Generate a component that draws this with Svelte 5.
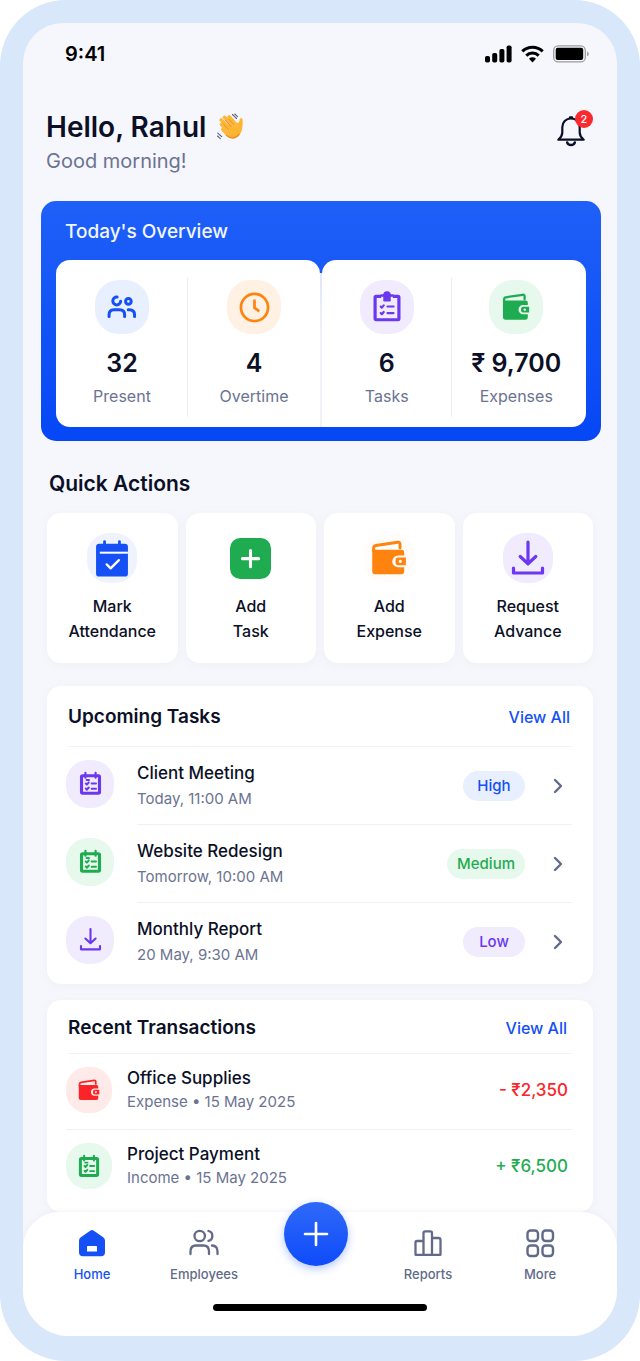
<script>
	const overview = [
		[
			{ icon: 'people', size: 30, tone: 'blue', value: '32', label: 'Present' },
			{ icon: 'clock', size: 31, tone: 'orange', value: '4', label: 'Overtime' }
		],
		[
			{ icon: 'clipboard', size: 30, tone: 'purple', value: '6', label: 'Tasks' },
			{ icon: 'wallet', size: 28, tone: 'green', value: '₹ 9,700', label: 'Expenses' }
		]
	];

	const actions = [
		{ icon: 'calendar', size: 34, tone: 'pale', lines: ['Mark', 'Attendance'] },
		{ icon: 'plusbox', size: 41, tone: 'plain', lines: ['Add', 'Task'] },
		{ icon: 'wallet', size: 36, tone: 'amber', lines: ['Add', 'Expense'] },
		{ icon: 'download', size: 32, tone: 'purple', lines: ['Request', 'Advance'] }
	];

	const tasks = [
		{ icon: 'note', size: 25, tone: 'purple', title: 'Client Meeting', due: 'Today, 11:00 AM', level: 'High', color: 'blue' },
		{ icon: 'note', size: 25, tone: 'green', title: 'Website Redesign', due: 'Tomorrow, 10:00 AM', level: 'Medium', color: 'green' },
		{ icon: 'download', size: 21, tone: 'purple', title: 'Monthly Report', due: '20 May, 9:30 AM', level: 'Low', color: 'purple' }
	];

	const transactions = [
		{ icon: 'wallet', size: 22, tone: 'red', title: 'Office Supplies', info: 'Expense • 15 May 2025', amount: '- ₹2,350' },
		{ icon: 'note', size: 24, tone: 'green', title: 'Project Payment', info: 'Income • 15 May 2025', amount: '+ ₹6,500' }
	];
</script>

{#snippet glyph(name, size)}
	<svg class="glyph" width={size} height={size} viewBox="0 0 32 32" fill="none" stroke="currentColor" stroke-width="3.2" stroke-linecap="round" stroke-linejoin="round" aria-hidden="true">
		{#if name === 'people'}
			<path d="M10.8 5.4a4.200 4.200 0 1 0 3.800 4.400" />
			<circle cx="22.8" cy="10" r="3" />
			<path d="M2.200 26v-1.600c0-3.600 2.200-5.400 5.200-5.400h6.200c3.200 0 5.200 1.800 5.200 5.400v1.600" />
			<path d="M22.600 19h1.200c3.400 0 5.600 2 5.600 5.400v1.600" />
		{:else if name === 'clock'}
			<circle cx="16" cy="16" r="14" stroke-width="2.800" />
			<path d="M16 9v7.500l4 2.800" stroke-width="2.800" />
		{:else if name === 'clipboard'}
			<rect x="3.300" y="4.600" width="25.400" height="25" rx="1" stroke-width="3.400" />
			<path d="M9.800 6.300h12.400" stroke="#f0ebfd" stroke-width="2.400" stroke-linecap="butt" />
			<path d="M9.500 3h3a3.600 3.600 0 0 1 7 0h3" stroke-width="1" />
			<path d="M12 9V3.200a4 4 0 0 1 8 0V9q0 1-1 1h-6q-1 0-1-1z" fill="currentColor" stroke="none" />
			<path d="M9.300 15.500l1.200 1.200 2-2.400M16.500 15.500h6.500M9.300 22.500l1.200 1.200 2-2.400M16.500 22.500h6.500" stroke-width="2.300" />
		{:else if name === 'wallet'}
			<path d="M2.400 10V7.200q0-2 2-2.300L23.800 2q2-.2 2 1.800v3.400" stroke-width="2.600" />
			<path d="M1.100 8q1 .7 3 .7h22.900q2.500 0 2.500 2.500v2.500h-5.300a5.300 5.300 0 0 0 0 10.600h5.300v3.200q0 3-3 3H4.100q-3 0-3-3z" fill="currentColor" stroke="none" />
			<path d="M31 15.600v6.800h-6.800q-2.400 0-2.400-2.400v-2q0-2.400 2.400-2.400zM26 17.600a1.400 1.400 0 1 0 .1 0z" fill="currentColor" stroke="none" fill-rule="evenodd" />
		{:else if name === 'calendar'}
			<path d="M9 .5v4M23 .5v4" stroke-width="2.600" />
			<rect x="1" y="2.500" width="30" height="31" rx="3" fill="currentColor" stroke="none" />
			<path d="M4.500 11h26.500" stroke="#fff" stroke-width="1.900" stroke-linecap="butt" />
			<path d="M11 22l3.700 3.700L22.500 18" stroke="#fff" stroke-width="2.200" />
		{:else if name === 'plusbox'}
			<rect width="32" height="32" rx="8" fill="currentColor" stroke="none" />
			<path d="M16 9.800v12.600M9.700 16.100h12.600" stroke="#fff" stroke-width="2.400" />
		{:else if name === 'download'}
			<path d="M16 0v20M8.200 14.500l7.800 7.200 7.800-7.200" />
			<path d="M1.500 26v5h29v-5" />
		{:else if name === 'note'}
			<rect x="4.500" y="6" width="23" height="22.500" rx="1.500" stroke-width="4" />
			<path d="M9.500 2.500v6M22.500 2.500v6" stroke-width="2.800" />
			<path d="M10 16l1.400 1.400 2.400-2.800M17.500 16h5.500M10 22.500l1.400 1.400 2.400-2.800M17.500 22.800h5.500M11 11.500h3" stroke-width="2.600" />
		{/if}
	</svg>
{/snippet}

<div class="phone">
	<div class="screen">
		<div class="status">
			<span class="time">9:41</span>
			<div class="signals" aria-hidden="true">
				<svg width="27" height="18" viewBox="0 0 27 18">
					<rect x="0" y="11" width="5" height="6.500" rx="1.800" />
					<rect x="7.200" y="8" width="5" height="9.500" rx="1.800" />
					<rect x="14.400" y="4" width="5" height="13.500" rx="1.800" />
					<rect x="21.600" y="0.500" width="5" height="17" rx="1.800" />
				</svg>
				<svg width="23" height="18" viewBox="0 0 23 18" fill="none" stroke="#000" stroke-width="3">
					<path d="M1.300 6.400a14.500 14.500 0 0 1 20.400 0" />
					<path d="M5.300 10.600a8.800 8.800 0 0 1 12.400 0" />
					<path d="M11.500 17.500l-3.500-3.700a5 5 0 0 1 7 0z" fill="#000" stroke="none" />
				</svg>
				<svg width="36" height="18" viewBox="0 0 36 18">
					<rect x="0.700" y="0.900" width="31.600" height="16" rx="4.500" fill="none" stroke="#9b9ba3" stroke-width="1.300" />
					<rect x="2.700" y="2.800" width="27.500" height="12.200" rx="2" />
					<path d="M34 6.500q1.800.8 1.800 2.400T34 11.300z" fill="#9b9ba3" />
				</svg>
			</div>
		</div>

		<header class="greeting">
			<div>
				<h1>
					Hello, Rahul
					<svg width="28" height="28" viewBox="0 0 28 28" fill="none" stroke-linecap="round" role="img" aria-label="Waving hand">
						<path d="M10.500 11.500L23 9.500l.8-3.500q1.500-1.800 2.700 0 .5 4.500-.2 8.500c-.6 6-4.300 10.500-9.500 10.500-3.500 0-6-2-8-4.500z" fill="#fdb52f" />
						<path d="M5.500 11.500l8 8M5.200 7l9 9.500M8.500 4.300l9.500 10M13.200 4l8 9M6.800 16.500l5 5" stroke="#fdb73a" stroke-width="3.600" />
						<path d="M7.500 11.200l5 5.200M9.500 7.600l5.600 6M13.200 6.500l4.600 5" stroke="#e88c24" stroke-width="0.900" />
						<path d="M10.500 22.500q7 5.500 12.500-1" stroke="#ee9124" stroke-width="1.500" />
						<path d="M16.500 1.500l4 4M18.800 1l3 3M1.800 20.200l4 3.500M1.500 23l3 2.700" stroke="#5e6070" stroke-width="1.100" stroke-dasharray="1.500 .8" />
					</svg>
				</h1>
				<p>Good morning!</p>
			</div>
			<button class="bell" aria-label="Notifications">
				<svg width="30" height="32" viewBox="0 0 30 32" fill="none" stroke="#0b1028" stroke-width="2.200" stroke-linejoin="round" stroke-linecap="round">
					<path d="M15 3.500c-5.200 0-8.700 3.700-8.700 8.800v5.200c0 2.600-1.200 4.700-4 7.200h25.400c-2.800-2.500-4-4.600-4-7.200v-5.200c0-5.100-3.500-8.800-8.700-8.800z" />
					<path d="M14 2.500h2M11.200 27.500a3.900 3.200 0 0 0 7.600 0" stroke-width="2.600" />
				</svg>
				<span class="count">2</span>
			</button>
		</header>

		<section class="overview">
			<h2>Today's Overview</h2>
			<div class="panels">
				{#each overview as pair}
					<div class="panel">
						{#each pair as stat}
							<div class="stat">
								<span class="disc {stat.tone}">{@render glyph(stat.icon, stat.size)}</span>
								<strong>{stat.value}</strong>
								<span class="label">{stat.label}</span>
							</div>
						{/each}
					</div>
				{/each}
			</div>
		</section>

		<section class="quick">
			<h2>Quick Actions</h2>
			<div class="grid">
				{#each actions as action}
					<button class="action">
						<span class="disc {action.tone}">{@render glyph(action.icon, action.size)}</span>
						<span>{action.lines[0]}<br />{action.lines[1]}</span>
					</button>
				{/each}
			</div>
		</section>

		<section class="card tasks">
			<div class="card-head">
				<h2>Upcoming Tasks</h2>
				<a href="#tasks">View All</a>
			</div>
			<ul>
				{#each tasks as task}
					<li>
						<span class="disc {task.tone}">{@render glyph(task.icon, task.size)}</span>
						<div class="row">
							<div class="text">
								<h3>{task.title}</h3>
								<p>{task.due}</p>
							</div>
							<span class="badge {task.color}">{task.level}</span>
							<svg class="chevron" width="10" height="16" viewBox="0 0 10 16" fill="none" stroke="#636b8a" stroke-width="2.400" stroke-linecap="round" stroke-linejoin="round" aria-hidden="true">
								<path d="M2 2l6 6-6 6" />
							</svg>
						</div>
					</li>
				{/each}
			</ul>
		</section>

		<section class="card recent">
			<div class="card-head">
				<h2>Recent Transactions</h2>
				<a href="#transactions">View All</a>
			</div>
			<ul>
				{#each transactions as item}
					<li>
						<span class="disc {item.tone}">{@render glyph(item.icon, item.size)}</span>
						<div class="text">
							<h3>{item.title}</h3>
							<p>{item.info}</p>
						</div>
						<span class="amount" class:income={item.amount.startsWith('+')}>{item.amount}</span>
					</li>
				{/each}
			</ul>
		</section>

		<footer>
			<nav>
				<a href="#home" class="active">
					<svg width="30" height="30" viewBox="0 0 30 30" aria-hidden="true">
						<path d="M13.200 2.700q1.800-1.400 3.600 0l9.400 6.600q1.800 1.400 1.800 3.500v11.400q0 4-4 4H6q-4 0-4-4V12.800q0-2.100 1.800-3.500z" fill="currentColor" />
						<rect x="10" y="18" width="10" height="5.500" rx="0.600" fill="#fff" />
					</svg>
					Home
				</a>
				<a href="#employees">
					<svg width="30" height="30" viewBox="0 0 30 30" fill="none" stroke="currentColor" stroke-width="2.300" stroke-linecap="round" aria-hidden="true">
						<circle cx="10.700" cy="8" r="5.200" />
						<path d="M19.500 3a5.100 5.100 0 0 1 0 9.900" />
						<path d="M1.500 26v-2.500c0-4 2.400-6 5.500-6h7.500c3.400 0 5.500 2 5.500 6V26" />
						<path d="M23 17.500c3.500.2 5.500 2.200 5.500 6V26" />
					</svg>
					Employees
				</a>
				<button class="fab" aria-label="Add">
					<svg width="26" height="26" viewBox="0 0 26 26" stroke="#fff" stroke-width="2.600" stroke-linecap="round">
						<path d="M13 2v22M2 13h22" />
					</svg>
				</button>
				<a href="#reports">
					<svg width="30" height="30" viewBox="0 0 30 30" fill="none" stroke="currentColor" stroke-width="2.300" stroke-linejoin="round" aria-hidden="true">
						<path d="M2.500 26.800V14.500q0-1.500 1.500-1.500h6.500v13.800zM10.500 26.800V5q0-1.700 1.700-1.700h5.100Q19 3.300 19 5v21.800zM19 10h6.500q2 0 2 2v14.800H19z" />
					</svg>
					Reports
				</a>
				<a href="#more">
					<svg width="30" height="30" viewBox="0 0 30 30" fill="none" stroke="currentColor" stroke-width="2.400" aria-hidden="true">
						<rect x="2.500" y="2.500" width="10.500" height="10.500" rx="3.200" />
						<rect x="17.500" y="2.500" width="10.500" height="10.500" rx="3.200" />
						<rect x="2.500" y="17.500" width="10.500" height="10.500" rx="3.200" />
						<rect x="17.500" y="17.500" width="10.500" height="10.500" rx="3.200" />
					</svg>
					More
				</a>
			</nav>
			<div class="indicator"></div>
		</footer>
	</div>
</div>

<style>
	:global(body) {
		background: #fff;
	}

	.phone {
		box-sizing: border-box;
		min-height: 100vh;
		padding: 23px 23px 25px;
		border-radius: 66px;
		background: #d8e7fa;
		color: #0b1026;
		font-family: Inter, 'Liberation Sans', sans-serif;
	}

	.screen {
		display: flex;
		flex-direction: column;
		min-height: calc(100vh - 48px);
		overflow: hidden;
		border-radius: 40px 40px 46px 46px;
		background: #f6f7fc;
	}

	h1,
	h2,
	h3,
	p,
	ul {
		margin: 0;
		padding: 0;
		list-style: none;
	}

	button {
		padding: 0;
		border: 0;
		background: none;
		color: inherit;
		font: inherit;
	}

	a {
		color: #1450f5;
		text-decoration: none;
	}

	h2 {
		font-size: 19px;
		font-weight: 600;
		line-height: 26px;
	}

	h3 {
		font-size: 17px;
		font-weight: 500;
	}

	p {
		color: #6b7391;
		font-size: 15px;
	}

	.glyph {
		overflow: visible;
	}

	.status {
		display: flex;
		align-items: center;
		justify-content: space-between;
		height: 62px;
		padding: 0 28px 0 42px;
	}

	.time {
		color: #000;
		font-size: 20px;
		font-weight: 600;
	}

	.signals {
		display: flex;
		gap: 9px;
	}

	.greeting {
		display: flex;
		justify-content: space-between;
		margin-top: 25px;
		padding: 0 28px 0 23px;
	}

	.greeting h1 {
		display: flex;
		align-items: center;
		gap: 10px;
		font-size: 28px;
		font-weight: 600;
		line-height: 34px;
	}

	.greeting p {
		margin-top: 4px;
		font-size: 20px;
		line-height: 26px;
	}

	.bell {
		position: relative;
		align-self: flex-start;
		height: 32px;
		margin: 5px 3px 0 0;
	}

	.count {
		position: absolute;
		top: -5px;
		right: -7px;
		width: 18px;
		border-radius: 9px;
		background: #fa2a2e;
		color: #fff;
		font-size: 11px;
		font-weight: 500;
		line-height: 18px;
	}

	.disc {
		display: flex;
		flex: none;
		align-items: center;
		justify-content: center;
		width: 54px;
		height: 54px;
		border-radius: 24px;
	}

	.blue {
		background: #e8effe;
		color: #1450f5;
	}

	.pale {
		background: #eef3fe;
		color: #1450f5;
	}

	.orange {
		background: #fff1e4;
		color: #ff830f;
	}

	.amber {
		background: #fffcf9;
		color: #ff830f;
	}

	.purple {
		background: #f0ebfd;
		color: #6b38ef;
	}

	.green {
		background: #e7f8ed;
		color: #1fac51;
	}

	.red {
		background: #ffeaea;
		color: #fb2529;
	}

	.plain {
		color: #1fac51;
	}

	.overview {
		margin: 27px 16px 0 18px;
		padding: 18px 15px 14px;
		border-radius: 15px;
		background: linear-gradient(#1f60f8, #0647f6);
	}

	.overview h2 {
		margin: 0 0 15px 9px;
		color: #f2f6ff;
		font-weight: 500;
	}

	.panels {
		display: grid;
		grid-template-columns: 1fr 1fr;
		gap: 2px;
	}

	.panel {
		position: relative;
		display: grid;
		grid-template-columns: 1fr 1fr;
		border-radius: 14px 14px 0 14px;
		background: #fff;
	}

	.panel:first-child::after {
		position: absolute;
		top: 13px;
		right: -2px;
		bottom: 0;
		width: 2px;
		background: linear-gradient(#dfe6fa, #f1f2f8 40%);
		content: '';
	}

	.panel:last-child {
		padding-right: 5px;
		border-radius: 14px 14px 14px 0;
	}

	.stat {
		position: relative;
		display: flex;
		flex-direction: column;
		align-items: center;
		padding: 20px 0;
	}

	.stat:first-child::after {
		position: absolute;
		top: 18px;
		right: 0;
		bottom: 10px;
		width: 1px;
		background: #ececf3;
		content: '';
	}

	.stat strong {
		margin-top: 14px;
		font-size: 25px;
		font-weight: 600;
		line-height: 30px;
	}

	.label {
		margin-top: 7px;
		color: #6b7391;
		font-size: 16px;
		line-height: 22px;
	}

	.quick {
		margin: 30px 24px 0;
	}

	.quick h2 {
		margin-left: 2px;
		font-size: 21px;
	}

	.grid {
		display: grid;
		grid-template-columns: repeat(4, 1fr);
		gap: 8px;
		margin-top: 16px;
	}

	.action {
		display: flex;
		flex-direction: column;
		align-items: center;
		gap: 11px;
		padding: 20px 0 19px;
		border-radius: 14px;
		background: #fff;
		box-shadow: 0 2px 6px #e9ebf580;
		font-size: 16px;
		font-weight: 500;
		line-height: 25px;
	}

	.action .disc {
		width: 50px;
		height: 50px;
		border-radius: 22px;
	}

	.card {
		margin: 23px 24px 0;
		border-radius: 14px;
		background: #fff;
		box-shadow: 0 2px 6px #e9ebf580;
	}

	.card-head {
		display: flex;
		align-items: center;
		justify-content: space-between;
		height: 58px;
		margin: 0 21px;
		padding-top: 2px;
		border-bottom: 1px solid #f0f1f6;
	}

	.card-head a {
		margin-right: 2px;
		font-size: 16px;
		font-weight: 500;
	}

	.tasks {
		padding-bottom: 3px;
	}

	.tasks li {
		display: flex;
		align-items: center;
		gap: 23px;
		padding: 0 21px 0 19px;
	}

	.tasks .disc {
		width: 48px;
		height: 48px;
		margin-bottom: 5px;
		border-radius: 22px;
	}

	.row {
		display: flex;
		flex: 1;
		align-items: center;
		padding: 13px 9px 12px 0;
		border-bottom: 1px solid #f0f1f6;
	}

	li:last-child .row {
		border-color: transparent;
	}

	.text {
		flex: 1;
	}

	.tasks .text {
		line-height: 26px;
	}

	.badge {
		box-sizing: border-box;
		min-width: 62px;
		padding: 0 10px;
		border-radius: 15px;
		font-size: 15px;
		font-weight: 500;
		line-height: 30px;
		text-align: center;
	}

	.chevron {
		margin-left: 28px;
	}

	.recent {
		margin-top: 16px;
	}

	.recent .card-head {
		height: 51px;
	}

	.recent .card-head a {
		margin-right: 5px;
	}

	.recent li {
		display: flex;
		align-items: center;
		gap: 15px;
		margin: 0 21px 0 19px;
		padding: 12px 4px 15px 0;
		border-bottom: 1px solid #f0f1f6;
		line-height: 24px;
	}

	.recent li:last-child {
		padding-bottom: 22px;
		border: 0;
	}

	.recent .disc {
		width: 46px;
		height: 46px;
		border-radius: 21px;
	}

	.amount {
		color: #fb2529;
		font-size: 17px;
		font-weight: 500;
	}

	.income {
		color: #1fac51;
	}

	footer {
		margin-top: auto;
		padding-bottom: 25px;
		border-radius: 36px 36px 0 0;
		background: #fff;
		box-shadow: 0 -1px 4px #e9ebf5b0;
	}

	nav {
		display: grid;
		grid-template-columns: repeat(5, 1fr);
		padding: 16px 21px 0 13px;
	}

	nav a {
		display: flex;
		flex-direction: column;
		align-items: center;
		gap: 6px;
		color: #626a89;
		font-size: 13px;
		font-weight: 500;
		line-height: 20px;
	}

	nav .active {
		color: #1450f5;
	}

	.fab {
		display: flex;
		align-items: center;
		justify-content: center;
		justify-self: center;
		width: 64px;
		height: 64px;
		margin: -26px 0 0;
		border-radius: 50%;
		background: linear-gradient(#2f69f8, #0e4bfa);
		box-shadow: 0 3px 8px #1450f550;
	}

	.indicator {
		width: 36%;
		height: 7px;
		margin: 20px auto 0;
		border-radius: 4px;
		background: #000;
	}
</style>
